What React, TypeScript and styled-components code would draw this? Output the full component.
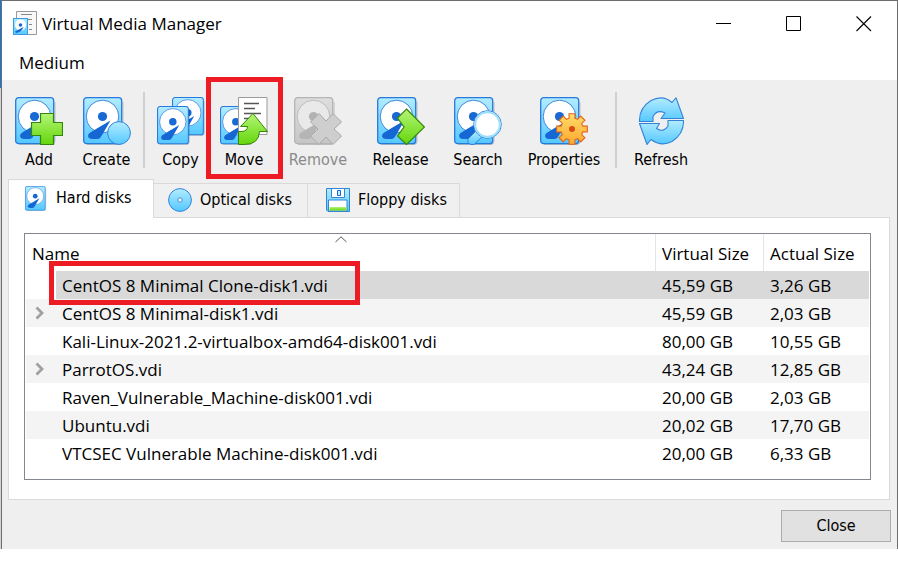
import React, { useState } from "react";
import styled, { createGlobalStyle, css } from "styled-components";

const segoe = `"Open Sans", "Noto Sans", sans-serif`;
const tahoma = `"DejaVu Sans Condensed", "Noto Sans", sans-serif`;

const GlobalStyle = createGlobalStyle`
  *, *::before, *::after { box-sizing: border-box; }
  body { margin: 0; background: #fff; color: #000; }
  button { color: inherit; border: 0; padding: 0; background: none; }
`;

const Desktop = styled.div`
  padding-left: 1px;
  background: linear-gradient(#0f7be0 0 88px, #d4d4d4 88px) left / 1px 100% no-repeat;
`;

const Window = styled.main`
  border: solid #6d6d6d;
  border-width: 1px 1px 0;
  background: #efefef;
  font-family: ${segoe};
  font-size: 17px;
`;

const TitleBar = styled.header`
  display: flex;
  align-items: center;
  gap: 5px;
  height: 45px;
  padding-left: 11px;
  background: #fff;
`;

const AppIconSvg = styled.svg`
  display: block;
  margin-bottom: 2px;
`;

const Title = styled.h1`
  flex: 1;
  margin: 0;
  font-size: 17px;
  font-weight: 400;
  line-height: 24px;
`;

const WindowControls = styled.div`
  display: flex;
`;

const ControlButton = styled.button`
  display: grid;
  place-items: center;
  width: 70px;
  height: 45px;
  padding-left: 3px;
`;

const MenuBar = styled.nav`
  height: 34px;
  padding-left: 17px;
  background: #fff;
`;

const MenuButton = styled.button`
  font: 17px/34px ${segoe};
`;

const ToolBar = styled.div`
  display: flex;
  height: 99px;
  padding: 17px 0 0 4px;
`;

const ToolButton = styled.button<{ $width: number }>`
  position: relative;
  display: flex;
  flex-direction: column;
  align-items: center;
  gap: 5px;
  width: ${(p) => p.$width}px;
  height: 72px;
  font: 16px/20px ${tahoma};
  &:disabled { color: #8a8a8a; }
  svg { display: block; flex: none; }
`;

const ToolSeparator = styled.div`
  width: 8px;
  height: 76px;
  margin-top: -5px;
  padding-left: 2px;
  &::before {
    content: "";
    display: block;
    width: 2px;
    height: 100%;
    background: #d0d0d0;
  }
`;

const marker = css`
  position: absolute;
  border: 5px solid #ed1c24;
  pointer-events: none;
`;

const ToolMarker = styled.span`
  ${marker}
  inset: -20px -7px -10px -6px;
`;

const RowMarker = styled.span`
  ${marker}
  top: -10px;
  left: -7px;
  width: 311px;
  height: 44px;
`;

const TabList = styled.div`
  display: flex;
  align-items: flex-end;
  padding-left: 6px;
`;

const Tab = styled.button<{ $active: boolean; $width: number; $indent: number }>`
  display: flex;
  align-items: center;
  gap: 8px;
  width: ${(p) => p.$width}px;
  height: 34px;
  padding: 0 0 2px ${(p) => p.$indent}px;
  border: solid #dadada;
  border-width: 1px 1px 0 0;
  background: #f0f0f0;
  font: 16px/20px ${tahoma};
  white-space: nowrap;
  ${(p) =>
    p.$active &&
    css`
      position: relative;
      height: 39px;
      margin-bottom: -1px;
      border-left-width: 1px;
      background: #fff;
    `}
`;

const Panel = styled.section`
  margin: 0 7px 0 6px;
  padding: 15px 18px 19px 15px;
  border: 1px solid #dadada;
  background: #fff;
`;

const ListFrame = styled.div`
  padding: 0 1px 12px;
  border: 1px solid #828790;
`;

const MediaTable = styled.table`
  width: 100%;
  table-layout: fixed;
  border-collapse: separate;
  border-spacing: 0;
`;

const HeadCell = styled.th`
  position: relative;
  height: 37px;
  padding: 2px 6px 0;
  border-left: 1px solid #e5e5e5;
  font-weight: 400;
  line-height: 28px;
  text-align: left;
  white-space: nowrap;
  &:first-child { border-left: 0; }
`;

const SortMark = styled.svg`
  position: absolute;
  top: 2px;
  left: 50%;
  margin-left: -6px;
`;

const Cell = styled.td`
  position: relative;
  height: 28px;
  padding: 2px 7px 0;
  line-height: 26px;
  white-space: nowrap;
`;

const NameCell = styled(Cell)`
  padding-left: 6px;
`;

const ExpandCell = styled(Cell)`
  padding: 0 0 0 9px;
`;

const Row = styled.tr<{ $selected: boolean }>`
  &:nth-child(even) { background: #f4f4f4; }
  ${(p) =>
    p.$selected &&
    css`
      ${Cell}:not(:first-child) { background: #d9d9d9; }
    `}
`;

const ExpandButton = styled.button`
  display: block;
  width: 10px;
  height: 14px;
`;

const Footer = styled.footer`
  display: flex;
  justify-content: flex-end;
  padding: 10px 6px 7px;
`;

const CloseButton = styled.button`
  width: 110px;
  height: 32px;
  border: 1px solid #adadad;
  background: #e1e1e1;
  font: 16px/20px ${tahoma};
`;

const Gradients = () => (
  <svg width="0" height="0" aria-hidden="true" display="block">
    <defs>
      <linearGradient id="blue" x1="0" y1="0" x2="0" y2="1">
        <stop offset="0" stopColor="#b3ecff" />
        <stop offset="1" stopColor="#54c8ff" />
      </linearGradient>
      <linearGradient id="green" x1="0" y1="0" x2="0" y2="1">
        <stop offset="0" stopColor="#b4f578" />
        <stop offset="1" stopColor="#64d60a" />
      </linearGradient>
      <linearGradient id="orange" x1="0" y1="0" x2="0" y2="1">
        <stop offset="0" stopColor="#ffdc6a" />
        <stop offset="1" stopColor="#ffa82e" />
      </linearGradient>
      <linearGradient id="grey" x1="0" y1="0" x2="0" y2="1">
        <stop offset="0" stopColor="#dedede" />
        <stop offset="1" stopColor="#c6c6c6" />
      </linearGradient>
    </defs>
  </svg>
);

const Drive = ({ grey = false }: { grey?: boolean }) => (
  <g>
    <path d="M4 47.5H37Q40 47.5 40 44V5" fill="none" stroke="#000" strokeOpacity=".2" />
    <rect x=".7" y=".7" width="38" height="46" rx="3" fill={grey ? "url(#grey)" : "url(#blue)"} stroke={grey ? "#b4b4b4" : "#2779dc"} strokeWidth="1.3" />
    <circle cx="19.5" cy="19.5" r="16.3" fill={grey ? "#e9e9e9" : "#fff"} stroke={grey ? "#bdbdbd" : "#3a86dd"} />
    <circle cx="19.5" cy="19.5" r="4.6" fill={grey ? "#b2b2b2" : "#1869d4"} />
    <path d="M27.5 23.5L15.5 30.5L6.500 36Q4.500 37.500 5.200 40Q6 42 9 42H15Q17.500 41.500 18.800 38.500Z" fill={grey ? "#b5b5b5" : "#1568d3"} />
  </g>
);

const Icon = ({ children }: { children: React.ReactNode }) => (
  <svg width="48" height="48" viewBox="0 0 48 48" aria-hidden="true">
    {children}
  </svg>
);

const AddIcon = () => (
  <Icon>
    <Drive />
    <path d="M25.5 16.5H38.5V25.5H47.5V38.5H38.5V47.5H25.5V38.5H16.5V25.5H25.5Z" fill="url(#green)" stroke="#37860c" strokeWidth="1.2" />
  </Icon>
);

const CreateIcon = () => (
  <Icon>
    <Drive />
    <circle cx="36" cy="36" r="11.4" fill="url(#blue)" stroke="#3483d9" />
  </Icon>
);

const CopyIcon = () => (
  <Icon>
    <g transform="translate(15 0) scale(.81)"><Drive /></g>
    <g transform="translate(0 9) scale(.81)"><Drive /></g>
  </Icon>
);

const MoveIcon = () => (
  <Icon>
    <g transform="translate(0 9) scale(.81)"><Drive /></g>
    <path d="M18.5.5H47V37.5H18.5Z" fill="#fff" stroke="#9b9b9b" />
    <path d="M24 6.5H39M24 11.5H35M24 16.5H41M24 21.5H35M24 26.5H32" stroke="#555" strokeWidth="1.6" />
    <path d="M33 16.500L47.500 34.500H39.500Q39 47.500 24 47.500H18.500V34.500H22Q27.500 34 27.500 29.500H20.500Z" fill="url(#green)" stroke="#37860c" />
  </Icon>
);

const RemoveIcon = () => (
  <Icon>
    <Drive grey />
    <path d="M25 16.5L32 24L39 16.5L47.5 25L40 32L47.5 39L39 47.5L32 40L25 47.5L16.5 39L24 32L16.5 25Z" fill="#cecece" stroke="#a8a8a8" />
  </Icon>
);

const ReleaseIcon = () => (
  <Icon>
    <Drive />
    <path d="M29.5 12L47.5 30L29.5 47.5L20.5 39L27 30L20.5 21Z" fill="url(#green)" stroke="#37860c" strokeWidth="1.2" />
  </Icon>
);

const SearchIcon = () => (
  <Icon>
    <Drive />
    <path d="M22 34L14 42Q13 46 17 47.5H20L29 39Z" fill="url(#blue)" stroke="#3483d9" />
    <circle cx="33.5" cy="27.5" r="13.8" fill="#fff" stroke="#3483d9" />
    <circle cx="33.5" cy="27.5" r="12.3" fill="none" stroke="#9adffb" strokeWidth="2" />
  </Icon>
);

const gearPath = (() => {
  const points: string[] = [];
  for (let tooth = 0; tooth < 8; tooth++) {
    const profile: [number, number][] = [[-15, 11.2], [-11, 15.6], [11, 15.6], [15, 11.2]];
    for (const [offset, radius] of profile) {
      const angle = ((tooth * 45 + offset) * Math.PI) / 180;
      points.push(`${(32 + radius * Math.cos(angle)).toFixed(2)} ${(32 + radius * Math.sin(angle)).toFixed(2)}`);
    }
  }
  return `M${points.join("L")}Z`;
})();

const PropertiesIcon = () => (
  <Icon>
    <Drive />
    <path d={gearPath} fill="url(#orange)" stroke="#e3631a" strokeWidth="1.1" />
    <circle cx="32" cy="32" r="3" fill="#d64b12" />
  </Icon>
);

const RefreshIcon = () => (
  <Icon>
    <g stroke="#3483d9" strokeWidth="1.1" fill="url(#blue)" strokeLinejoin="round">
      <path d="M2.5 24.5Q2 11 14 3.5Q26-2.5 35 5.5L39 .8L46.500 21.500H24L28 16Q20 12 16 19.500V24.500Z" />
      <path d="M46.5 23.5Q47 37 35 44.5Q24 50 14 42.500L10 47.500L2.500 26.500H22.500L19.500 31.500Q27 36 31 29V23.500Z" />
    </g>
  </Icon>
);

const DriveIcon = () => (
  <svg width="25" height="25" viewBox="0 0 48 48" aria-hidden="true">
    <g transform="translate(4 0)"><Drive /></g>
  </svg>
);

const AppIcon = () => (
  <AppIconSvg width="24" height="24" viewBox="0 0 24 24" aria-hidden="true">
    <path d="M3.5.5H23.5V23.5H3.5Z" fill="#f8f8f8" stroke="#9a9a9a" />
    <path d="M8 3.5H19M12 8.5H19M16 13.5H19M16 18.5H19" stroke="#888" />
    <g transform="translate(0 7)">
      <rect x=".5" y=".5" width="14" height="16" fill="url(#blue)" stroke="#3b9be0" />
      <circle cx="7.500" cy="7" r="5.500" fill="#fff" />
      <circle cx="7.500" cy="7" r="1.800" fill="#1869d4" />
      <path d="M10.500 9Q9 14 3 15L2 13.500Z" fill="#1568d3" />
    </g>
  </AppIconSvg>
);

const OpticalIcon = () => (
  <svg width="24" height="24" viewBox="0 0 24 24" aria-hidden="true">
    <circle cx="12" cy="12" r="11.4" fill="url(#blue)" stroke="#3483d9" />
    <circle cx="12" cy="12" r="2.2" fill="#e9f9ff" stroke="#4b8fd2" />
  </svg>
);

const FloppyIcon = () => (
  <svg width="24" height="24" viewBox="0 0 24 24" aria-hidden="true">
    <path d="M.5.5H23.5V23.5H2L.5 22Z" fill="url(#blue)" stroke="#3285d5" />
    <path d="M5.5.5H18.5V9.5H5.5ZM2.500 12H21V23H2.500Z" fill="#fff" stroke="#3285d5" />
    <path d="M3.500 19H20.500V22.500H3.500Z" fill="url(#green)" />
    <path d="M11.500 2.500H14.500V7.500H11.500Z" fill="#b8ecff" stroke="#1869d4" />
  </svg>
);

const Chevron = () => (
  <svg width="10" height="14" viewBox="0 0 10 14" aria-hidden="true" display="block">
    <path d="M1.5 1.5L7 7L1.5 12.5" fill="none" stroke="#a0a0a0" strokeWidth="2.8" />
  </svg>
);

interface Medium {
  name: string;
  virtual: string;
  actual: string;
  expandable?: boolean;
}

const media: Medium[] = [
  { name: "CentOS 8 Minimal Clone-disk1.vdi", virtual: "45,59 GB", actual: "3,26 GB" },
  { name: "CentOS 8 Minimal-disk1.vdi", virtual: "45,59 GB", actual: "2,03 GB", expandable: true },
  { name: "Kali-Linux-2021.2-virtualbox-amd64-disk001.vdi", virtual: "80,00 GB", actual: "10,55 GB" },
  { name: "ParrotOS.vdi", virtual: "43,24 GB", actual: "12,85 GB", expandable: true },
  { name: "Raven_Vulnerable_Machine-disk001.vdi", virtual: "20,00 GB", actual: "2,03 GB" },
  { name: "Ubuntu.vdi", virtual: "20,02 GB", actual: "17,70 GB" },
  { name: "VTCSEC Vulnerable Machine-disk001.vdi", virtual: "20,00 GB", actual: "6,33 GB" },
];

const tabs = [
  { label: "Hard disks", width: 146, indent: 14, icon: <DriveIcon /> },
  { label: "Optical disks", width: 154, indent: 14, icon: <OpticalIcon /> },
  { label: "Floppy disks", width: 152, indent: 18, icon: <FloppyIcon /> },
];

export default function App() {
  const [selected, setSelected] = useState(0);

  return (
    <Desktop>
      <GlobalStyle />
      <Window>
        <TitleBar>
          <AppIcon />
          <Title>Virtual Media Manager</Title>
          <WindowControls>
            <ControlButton aria-label="Minimize">
              <svg width="16" height="16"><path d="M0 7.5H15" stroke="#000" /></svg>
            </ControlButton>
            <ControlButton aria-label="Maximize">
              <svg width="16" height="16"><path d="M.5.5H14.500V14.500H.5Z" fill="none" stroke="#000" /></svg>
            </ControlButton>
            <ControlButton aria-label="Close window">
              <svg width="16" height="16"><path d="M.5.5L15 15M15 .5L.5 15" stroke="#000" strokeWidth="1.1" /></svg>
            </ControlButton>
          </WindowControls>
        </TitleBar>
        <MenuBar>
          <MenuButton>Medium</MenuButton>
        </MenuBar>
        <ToolBar role="toolbar" aria-label="Medium actions">
          <ToolButton $width={66}><AddIcon />Add</ToolButton>
          <ToolButton $width={69}><CreateIcon />Create</ToolButton>
          <ToolSeparator />
          <ToolButton $width={63}><CopyIcon />Copy</ToolButton>
          <ToolButton $width={64}><MoveIcon />Move<ToolMarker /></ToolButton>
          <ToolButton $width={84} disabled><RemoveIcon />Remove</ToolButton>
          <ToolButton $width={81}><ReleaseIcon />Release</ToolButton>
          <ToolButton $width={74}><SearchIcon />Search</ToolButton>
          <ToolButton $width={98}><PropertiesIcon />Properties</ToolButton>
          <ToolSeparator />
          <ToolButton $width={80}><RefreshIcon />Refresh</ToolButton>
        </ToolBar>
        <TabList role="tablist">
          {tabs.map((tab, i) => (
            <Tab
              key={tab.label}
              role="tab"
              aria-selected={i === 0}
              $active={i === 0}
              $width={tab.width}
              $indent={tab.indent}
            >
              {tab.icon}
              {tab.label}
            </Tab>
          ))}
        </TabList>
        <Panel role="tabpanel" aria-label="Hard disks">
          <ListFrame>
            <MediaTable>
              <colgroup>
                <col width="30" />
                <col />
                <col width="108" />
                <col width="106" />
              </colgroup>
              <thead>
                <tr>
                  <HeadCell colSpan={2} scope="col" aria-sort="ascending">
                    Name
                    <SortMark width="12" height="7" viewBox="0 0 12 7">
                      <path d="M.5 6L6 .8L11.500 6" fill="none" stroke="#555" />
                    </SortMark>
                  </HeadCell>
                  <HeadCell scope="col">Virtual Size</HeadCell>
                  <HeadCell scope="col">Actual Size</HeadCell>
                </tr>
              </thead>
              <tbody>
                {media.map((m, i) => (
                  <Row key={m.name} $selected={i === selected} onClick={() => setSelected(i)}>
                    <ExpandCell>
                      {m.expandable && <ExpandButton aria-label={`Expand ${m.name}`}><Chevron /></ExpandButton>}
                    </ExpandCell>
                    <NameCell>
                      {m.name}
                      {i === 0 && <RowMarker />}
                    </NameCell>
                    <Cell>{m.virtual}</Cell>
                    <Cell>{m.actual}</Cell>
                  </Row>
                ))}
              </tbody>
            </MediaTable>
          </ListFrame>
        </Panel>
        <Footer>
          <CloseButton>Close</CloseButton>
        </Footer>
      </Window>
      <Gradients />
    </Desktop>
  );
}
